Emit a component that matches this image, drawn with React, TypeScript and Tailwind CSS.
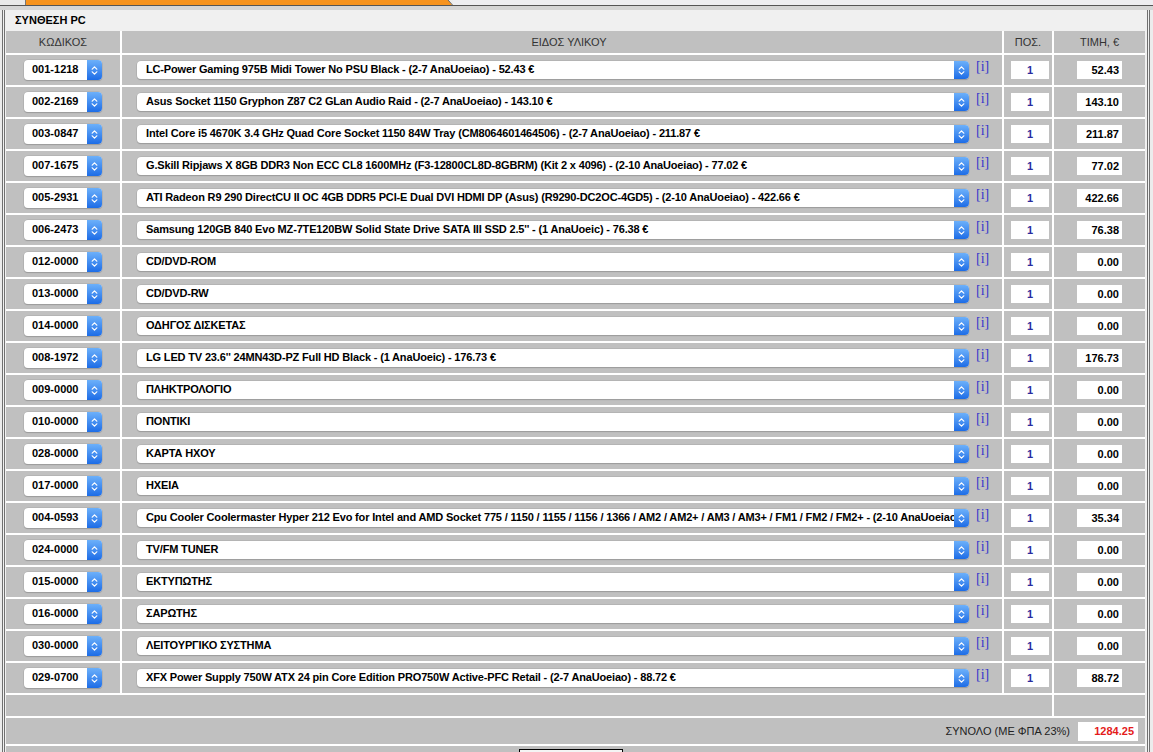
import React from "react";

const rows: [string, string, string][] = [
  ["001-1218", "LC-Power Gaming 975B Midi Tower No PSU Black - (2-7 AnaUoeiao) - 52.43 €", "52.43"],
  ["002-2169", "Asus Socket 1150 Gryphon Z87 C2 GLan Audio Raid - (2-7 AnaUoeiao) - 143.10 €", "143.10"],
  ["003-0847", "Intel Core i5 4670K 3.4 GHz Quad Core Socket 1150 84W Tray (CM8064601464506) - (2-7 AnaUoeiao) - 211.87 €", "211.87"],
  ["007-1675", "G.Skill Ripjaws X 8GB DDR3 Non ECC CL8 1600MHz (F3-12800CL8D-8GBRM) (Kit 2 x 4096) - (2-10 AnaUoeiao) - 77.02 €", "77.02"],
  ["005-2931", "ATI Radeon R9 290 DirectCU II OC 4GB DDR5 PCI-E Dual DVI HDMI DP (Asus) (R9290-DC2OC-4GD5) - (2-10 AnaUoeiao) - 422.66 €", "422.66"],
  ["006-2473", "Samsung 120GB 840 Evo MZ-7TE120BW Solid State Drive SATA III SSD 2.5'' - (1 AnaUoeic) - 76.38 €", "76.38"],
  ["012-0000", "CD/DVD-ROM", "0.00"],
  ["013-0000", "CD/DVD-RW", "0.00"],
  ["014-0000", "ΟΔΗΓΟΣ ΔΙΣΚΕΤΑΣ", "0.00"],
  ["008-1972", "LG LED TV 23.6'' 24MN43D-PZ Full HD Black - (1 AnaUoeic) - 176.73 €", "176.73"],
  ["009-0000", "ΠΛΗΚΤΡΟΛΟΓΙΟ", "0.00"],
  ["010-0000", "ΠΟΝΤΙΚΙ", "0.00"],
  ["028-0000", "ΚΑΡΤΑ ΗΧΟΥ", "0.00"],
  ["017-0000", "ΗΧΕΙΑ", "0.00"],
  ["004-0593", "Cpu Cooler Coolermaster Hyper 212 Evo for Intel and AMD Socket 775 / 1150 / 1155 / 1156 / 1366 / AM2 / AM2+ / AM3 / AM3+ / FM1 / FM2 / FM2+ - (2-10 AnaUoeiao) - 35.34 €", "35.34"],
  ["024-0000", "TV/FM TUNER", "0.00"],
  ["015-0000", "ΕΚΤΥΠΩΤΗΣ", "0.00"],
  ["016-0000", "ΣΑΡΩΤΗΣ", "0.00"],
  ["030-0000", "ΛΕΙΤΟΥΡΓΙΚΟ ΣΥΣΤΗΜΑ", "0.00"],
  ["029-0700", "XFX Power Supply 750W ATX 24 pin Core Edition PRO750W Active-PFC Retail - (2-7 AnaUoeiao) - 88.72 €", "88.72"],
];

function Stepper() {
  return (
    <div className="w-[15px] shrink-0 self-stretch rounded-r-[4px] bg-linear-to-b from-[#6cb0fa] to-[#1c6ce6] flex items-center justify-center">
      <svg width="7" height="11" viewBox="0 0 7 11">
        <path d="M1.2 4.2 L3.5 1.8 L5.8 4.2 M1.2 6.8 L3.5 9.2 L5.8 6.8" stroke="white" strokeWidth="1.2" fill="none" strokeLinecap="round" strokeLinejoin="round" />
      </svg>
    </div>
  );
}

function Select({ text, w, h, pl, extra }: { text: string; w: string; h: string; pl: string; extra?: string }) {
  return (
    <div className={`flex ${w} ${h} rounded-[4px] bg-white shadow-[0_0_0_0.5px_#a8a8a8,0_1px_1px_rgba(0,0,0,0.25)]`}>
      <div className={`flex-1 min-w-0 overflow-hidden whitespace-nowrap text-[11px] font-bold text-black flex items-center pb-[1px] ${pl} ${extra ?? ""}`}>{text}</div>
      <Stepper />
    </div>
  );
}

export default function App() {
  const font = { fontFamily: '"Liberation Sans", Arial, sans-serif' };
  return (
    <div className="w-[1153px] h-[752px] overflow-hidden bg-[#ececec]" style={font}>
      {/* top tab strip */}
      <div className="flex h-[5px]">
        <div className="w-[25px] bg-[#e9e9e9]" />
        <div className="w-[1px] bg-[#777]" />
        <div className="w-[421px] bg-[#f7931e]" />
        <svg width="6" height="5" viewBox="0 0 6 5" className="shrink-0">
          <polygon points="0,0 1,0 5,5 0,5" fill="#f7931e" />
          <line x1="1" y1="0" x2="5.5" y2="5" stroke="#666" strokeWidth="1" />
        </svg>
        <div className="flex-1 bg-[#eeeef1]" />
      </div>
      <div className="h-[1px] bg-[#555]" />
      <div className="h-[4px] bg-[#d5d5d5]" />
      {/* panel */}
      <div className="ml-[2px] w-[1148px] h-[742px] border-x-[3px] border-double border-[#707070] bg-[#f0f0f0] pl-[1px]">
        <div className="h-[21px] flex items-center pl-[9px] pb-[1px] text-[11px] font-bold text-black">ΣΥΝΘΕΣΗ PC</div>
        <div className="grid grid-cols-[114px_880px_48px_91px] gap-[2px] bg-white w-[1139px]">
          {/* header */}
          <div className="h-[22px] bg-[#c0c0c0] flex items-center justify-center text-[11px] text-[#333]">ΚΩΔΙΚΟΣ</div>
          <div className="h-[22px] bg-[#c0c0c0] flex items-center justify-center text-[11px] text-[#333] pl-[14px]">ΕΙΔΟΣ ΥΛΙΚΟΥ</div>
          <div className="h-[22px] bg-[#c0c0c0] flex items-center justify-center text-[11px] text-[#333]">ΠΟΣ.</div>
          <div className="h-[22px] bg-[#c0c0c0] flex items-center justify-center text-[11px] text-[#333]">ΤΙΜΗ, €</div>
          {rows.map(([code, desc, price]) => (
            <React.Fragment key={code}>
              <div className="h-[30px] bg-[#c0c0c0] flex items-center justify-center">
                <Select text={code} w="w-[78px]" h="h-[20px]" pl="pl-[8px]" />
              </div>
              <div className="h-[30px] bg-[#c0c0c0] flex items-center pl-[15px]">
                <Select text={desc} w="w-[832px]" h="h-[18px]" pl="pl-[9px]" extra="tracking-[-0.16px]" />
                <span className="self-start pt-[1px] ml-[7px] text-[14px] text-[#3636cc]" style={{ fontFamily: '"Liberation Serif", "Times New Roman", serif' }}>[i]</span>
              </div>
              <div className="h-[30px] bg-[#c0c0c0] flex items-center pl-[7px]">
                <div className="w-[38px] h-[18px] bg-white flex items-center justify-center text-[11px] font-bold text-[#2b2b9e]">1</div>
              </div>
              <div className="h-[30px] bg-[#c0c0c0] flex items-center justify-center">
                <div className="w-[45px] h-[18px] bg-white flex items-center justify-end pr-[3px] text-[11px] font-bold text-black">{price}</div>
              </div>
            </React.Fragment>
          ))}
          <div className="col-span-3 h-[21px] bg-[#c0c0c0]" />
          <div className="h-[21px] bg-[#c0c0c0]" />
          <div className="col-span-4 h-[26px] bg-[#c0c0c0] flex items-center justify-end pr-[7px]">
            <span className="text-[11px] text-[#222] mr-[8px]">ΣΥΝΟΛΟ (ΜΕ ΦΠΑ 23%)</span>
            <div className="w-[60px] h-[19px] bg-white flex items-center justify-end pr-[4px] text-[11px] font-bold text-[#e41b1b]">1284.25</div>
          </div>
          <div className="col-span-4 h-[30px] bg-[#c0c0c0] flex justify-center pt-[3px]">
            <div className="w-[104px] h-[22px] border border-black bg-[#f4f4f4] ml-[-9px]" />
          </div>
        </div>
      </div>
    </div>
  );
}
